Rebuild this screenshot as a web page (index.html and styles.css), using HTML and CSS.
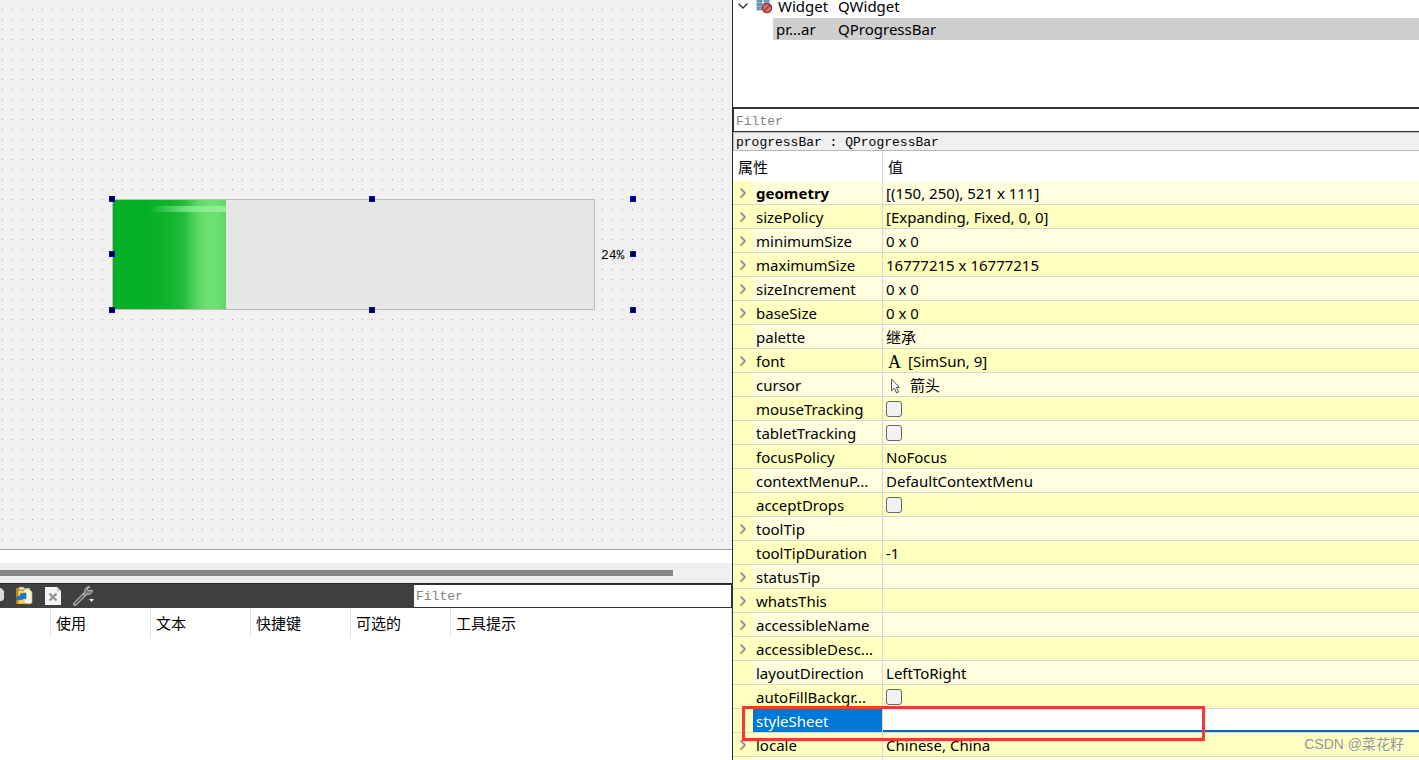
FILE: index.html
```
<!DOCTYPE html>
<html lang="zh-CN">
<head>
<meta charset="utf-8">
<title>Qt Designer</title>
<link rel="stylesheet" href="styles.css">
</head>
<body>
<svg class="defs" aria-hidden="true">
  <symbol id="chev" viewBox="0 0 8 12"><path d="M1.5 1.5 6 6 1.5 10.5" fill="none" stroke="#868686" stroke-width="1.7"/></symbol>
</svg>
<main class="app">
  <section class="left">
    <div class="canvas">
      <div class="widget">
        <progress class="bar" max="100" value="24" aria-label="progressBar"></progress>
        <span class="percent">24%</span>
        <i class="h tl"></i><i class="h tc"></i><i class="h tr"></i>
        <i class="h ml"></i><i class="h mr"></i>
        <i class="h bl"></i><i class="h bc"></i><i class="h br"></i>
      </div>
    </div>
    <div class="gap"></div>
    <div class="scroll"><div class="thumb"></div></div>
    <div class="toolbar">
      <div class="tools">
        <button class="tool cut" aria-label="复制"><svg width="4" height="16" viewBox="0 0 4 16"><path d="M0 0h1l3 3v8l-2 2H0z" fill="#dcdcdc"/></svg></button>
        <button class="tool" aria-label="粘贴"><svg width="18" height="20" viewBox="0 0 18 20">
          <path d="M1 2h14v15l-2 1H1z" fill="#e9b62c"/><path d="M1 2h2v16H1z" fill="#b98212"/>
          <path d="M4 1h5l1 3H4z" fill="#e8e8df" stroke="#77684a" stroke-width=".6"/>
          <path d="M4 5h5v12H4z" fill="#f6d565"/>
          <path d="M9 3h5l3 3v11l-3 1-5-1z" fill="#faf5d8" stroke="#c9ae62" stroke-width=".7"/>
          <path d="M1 14c0-3 2-4 5-4l-1-2 6-1v6l-2-1c-3 3-5 1-8 2z" fill="#1677e0" stroke="#0b4ea3" stroke-width=".5"/>
        </svg></button>
        <button class="tool" aria-label="删除"><svg width="16" height="18" viewBox="0 0 16 18">
          <path d="M0 0h12l4 4v14H0z" fill="#f4f4f4"/><path d="M12 0v4h4z" fill="#c9c9c9"/>
          <path d="m4.500 6.500 7 7m0-7-7 7" stroke="#929292" stroke-width="2.200"/>
        </svg></button>
        <button class="tool" aria-label="配置"><svg width="22" height="20" viewBox="0 0 22 20">
          <path d="M2 18 12 8" stroke="#a9a9a9" stroke-width="4" stroke-linecap="round"/>
          <path d="M2.500 17.500 12 8" stroke="#505050" stroke-width="1.600" stroke-linecap="round"/>
          <path d="M17 1c-3-1-6 2-5 5l-2 2 2 2 2-2c3 1 6-1 5-4l-3 1-2-2z" fill="#777" stroke="#c4c4c4"/>
          <path d="M16 13h5l-2.500 3z" fill="#eee"/>
        </svg></button>
      </div>
      <input class="filter" type="text" placeholder="Filter" aria-label="动作过滤">
    </div>
    <table class="actions">
      <thead><tr><th class="c0"></th><th class="c">使用</th><th class="c">文本</th><th class="c">快捷键</th><th class="c">可选的</th><th>工具提示</th></tr></thead>
    </table>
  </section>
  <section class="right">
    <div class="tree">
      <div class="node">
        <button class="fold" aria-label="折叠"><svg width="12" height="8" viewBox="0 0 12 8"><path d="M1.500 1.500 6 6l4.500-4.500" fill="none" stroke="#333" stroke-width="1.400"/></svg></button>
        <svg class="nicon" width="16" height="16" viewBox="0 0 16 16">
          <path d="M0 0h14v12H0z" fill="#dbe8f0"/>
          <path d="M1 1h5v3H1zM8 1h5v3H8zM1 5h5v3H1zM1 9h5v3H1zM8 5h5v3H8z" fill="#6e9fbe" stroke="#4f7896" stroke-width=".5"/>
          <circle cx="11" cy="10" r="4.500" fill="#c77" stroke="#a92f2f" stroke-width="1.500"/>
          <path d="m8 13 6-6" stroke="#a92f2f" stroke-width="1.500"/>
        </svg>
        <span class="nname">Widget</span><span>QWidget</span>
      </div>
      <div class="node child"><span class="nname">pr...ar</span><span>QProgressBar</span></div>
    </div>
    <input class="filter pf" type="text" placeholder="Filter" aria-label="属性过滤">
    <div class="path">progressBar : QProgressBar</div>
    <table class="props">
      <colgroup><col class="k0"><col class="k1"><col></colgroup>
      <thead><tr><th colspan="2" class="hn">属性</th><th class="hv">值</th></tr></thead>
      <tbody>
        <tr><td><button class="exp" aria-label="展开"><svg><use href="#chev"/></svg></button></td><td><b>geometry</b></td><td>[(150, 250), 521 x 111]</td></tr>
        <tr><td><button class="exp" aria-label="展开"><svg><use href="#chev"/></svg></button></td><td>sizePolicy</td><td>[Expanding, Fixed, 0, 0]</td></tr>
        <tr><td><button class="exp" aria-label="展开"><svg><use href="#chev"/></svg></button></td><td>minimumSize</td><td>0 x 0</td></tr>
        <tr><td><button class="exp" aria-label="展开"><svg><use href="#chev"/></svg></button></td><td>maximumSize</td><td>16777215 x 16777215</td></tr>
        <tr><td><button class="exp" aria-label="展开"><svg><use href="#chev"/></svg></button></td><td>sizeIncrement</td><td>0 x 0</td></tr>
        <tr><td><button class="exp" aria-label="展开"><svg><use href="#chev"/></svg></button></td><td>baseSize</td><td>0 x 0</td></tr>
        <tr><td></td><td>palette</td><td>继承</td></tr>
        <tr><td><button class="exp" aria-label="展开"><svg><use href="#chev"/></svg></button></td><td>font</td><td><div class="iv"><span class="fa">A</span>[SimSun, 9]</div></td></tr>
        <tr><td></td><td>cursor</td><td><div class="iv"><svg class="cur" width="16" height="16" viewBox="0 0 16 16"><path d="M4.500 1v12l3-3 2 5 2-1-2-4.500h3z" fill="#fff" stroke="#555"/></svg>箭头</div></td></tr>
        <tr><td></td><td><label for="mt">mouseTracking</label></td><td><input type="checkbox" id="mt"></td></tr>
        <tr><td></td><td><label for="tt">tabletTracking</label></td><td><input type="checkbox" id="tt"></td></tr>
        <tr><td></td><td>focusPolicy</td><td>NoFocus</td></tr>
        <tr><td></td><td>contextMenuP...</td><td>DefaultContextMenu</td></tr>
        <tr><td></td><td><label for="ad">acceptDrops</label></td><td><input type="checkbox" id="ad"></td></tr>
        <tr><td><button class="exp" aria-label="展开"><svg><use href="#chev"/></svg></button></td><td>toolTip</td><td></td></tr>
        <tr><td></td><td>toolTipDuration</td><td>-1</td></tr>
        <tr><td><button class="exp" aria-label="展开"><svg><use href="#chev"/></svg></button></td><td>statusTip</td><td></td></tr>
        <tr><td><button class="exp" aria-label="展开"><svg><use href="#chev"/></svg></button></td><td>whatsThis</td><td></td></tr>
        <tr><td><button class="exp" aria-label="展开"><svg><use href="#chev"/></svg></button></td><td>accessibleName</td><td></td></tr>
        <tr><td><button class="exp" aria-label="展开"><svg><use href="#chev"/></svg></button></td><td>accessibleDesc...</td><td></td></tr>
        <tr><td></td><td>layoutDirection</td><td>LeftToRight</td></tr>
        <tr><td></td><td><label for="af">autoFillBackgr...</label></td><td><input type="checkbox" id="af"></td></tr>
        <tr class="sel"><td><div class="mark"></div></td><td><label for="ss">styleSheet</label></td><td><input type="text" id="ss" class="edit"></td></tr>
        <tr><td><button class="exp" aria-label="展开"><svg><use href="#chev"/></svg></button></td><td>locale</td><td>Chinese, China</td></tr>
        <tr><td></td><td></td><td></td></tr>
      </tbody>
    </table>
  </section>
  <div class="wm">CSDN @菜花籽</div>
</main>
</body>
</html>
```
FILE: styles.css
```
* { box-sizing: border-box; }
body {
  margin: 0;
  background: #fff;
  color: #000;
  font: 15px/21px "Noto Sans", "Noto Sans CJK SC", sans-serif;
}
button { padding: 0; border: 0; background: none; display: flex; }
.defs { position: absolute; width: 0; height: 0; }
.app {
  position: relative;
  display: grid;
  grid-template-columns: minmax(0, 733fr) minmax(0, 686fr);
  height: 100vh;
  overflow: hidden;
}
.left { border-right: 1px solid #2b2b2b; display: flex; flex-direction: column; }

/* form canvas */
.canvas {
  position: relative;
  height: 550px;
  border-bottom: 1px solid #a0a0a0;
  background: #f0f0f0 conic-gradient(from 90deg at 9px 9px, #a0a0a0 25%, transparent 0) -7px 0 / 10px 10px;
}
.widget {
  position: absolute;
  left: 112px;
  top: 199px;
  width: 521px;
  height: 111px;
  display: flex;
  align-items: center;
}
.bar {
  appearance: none;
  width: 483px;
  height: 111px;
  border: 1px solid #bcbcbc;
  background: #e6e6e6;
}
.bar::-webkit-progress-bar { background: #e6e6e6; }
.bar::-webkit-progress-value {
  border-right: 2px solid #e6e6e6;
  background:
    linear-gradient(90deg, transparent 32%, #90ee90aa 62%, #90ee90 90%) 0 6px / 100% 6px no-repeat,
    linear-gradient(90deg, #06b025 30%, #0fb42c 50%, #24bd3d 63%, #5cd664 75%, #70e174 85%, #6cdf72 93%, #5fd868 100%);
}
.percent { margin-left: 6px; padding-top: 2px; font: 13px/16px "Liberation Mono", monospace; }
.h { position: absolute; width: 6px; height: 6px; background: #000; border: 1px solid #00f; }
.tl, .tc, .tr { top: -3px; }
.ml, .mr { top: 52px; }
.bl, .bc, .br { bottom: -3px; }
.tl, .ml, .bl { left: -3px; }
.tc, .bc { left: 257px; }
.tr, .mr, .br { right: -3px; }

.gap { height: 13px; }
.scroll { height: 20px; padding-top: 7px; background: #efefef; }
.thumb { width: 92%; height: 6px; background: #868686; }

/* action editor */
.toolbar {
  height: 25px;
  display: flex;
  background: #3f4041;
  border-top: 1px solid #262a29;
}
.tools { flex: 1; display: flex; align-items: center; gap: 12px; }
.tool.cut { margin-right: -1px; }
.filter {
  border: 1px solid #333;
  border-radius: 0;
  outline: 0;
  padding: 2px 2px 0;
  background: #fff;
  font: 13px/20px "Liberation Mono", monospace;
}
.filter::placeholder { color: #808080; }
.toolbar .filter { width: 318px; border-left: 0; }
.actions { width: 100%; table-layout: fixed; border-spacing: 0; }
.actions th {
  height: 29px;
  padding: 2px 5px 0;
  border-right: 1px solid #e2e2e2;
  font-weight: 400;
  text-align: left;
}
.c0 { width: 51px; }
.c { width: 100px; }

/* object tree */
.tree { height: 107px; overflow: hidden; }
.node { height: 24px; margin-top: -6px; display: flex; align-items: center; padding-left: 4px; }
.fold { margin-right: 7px; }
.nicon { margin-right: 6px; }
.nname { width: 60px; }
.child { height: 22px; margin: 0 0 0 40px; padding-left: 3px; background: #cfcfcf; }
.child .nname { width: 62px; }
.pf { display: block; width: 100%; height: 25px; border-top-width: 2px; border-right: 0; }
.path {
  height: 19px;
  padding-left: 2px;
  border: 1px solid #b8b8b8;
  border-right: 0;
  background: #f0f0f0;
  font: 13px/19px "Liberation Mono", monospace;
}

/* property table */
.props { width: 100%; table-layout: fixed; border-spacing: 0; }
.k0 { width: 20px; }
.k1 { width: 130px; }
.props th { height: 30px; padding: 2px 5px 0; font-weight: 400; text-align: left; }
.props .hn { border-right: 1px solid #dcdcdc; }
.props td {
  height: 24px;
  padding: 2px 3px 0;
  border-bottom: 1px solid #d6d6d6;
  background: #ffffbf;
  white-space: nowrap;
}
.props tr:nth-child(odd) td + td { background: #ffffdf; }
.props td:nth-child(2) { border-right: 1px solid #d6d6d6; }
.props td:first-child { padding: 0 6px; position: relative; }
.exp svg { width: 8px; height: 12px; }
.iv { display: flex; align-items: center; }
.fa { width: 22px; padding-left: 2px; font: 18px/20px "Liberation Serif", serif; }
.cur { margin: 0 7px 0 1px; }
input[type="checkbox"] {
  appearance: none;
  display: block;
  width: 16px;
  height: 16px;
  margin: 0 0 2px;
  border: 1px solid #666;
  border-radius: 3px;
  background: #f3f3f3;
}
.props .sel td:nth-child(2) { background: #0078d7; color: #fff; }
.props .sel td:nth-child(3) { padding: 0; }
.edit {
  display: block;
  width: 100%;
  height: 23px;
  border: 0;
  border-bottom: 2px solid #0067c0;
  outline: 0;
  background: #fff;
  font: inherit;
}
.mark {
  position: absolute;
  z-index: 1;
  left: 9px;
  top: -3px;
  width: 463px;
  height: 35px;
  border: 3px solid #fb3535;
  pointer-events: none;
}
.wm {
  position: absolute;
  right: 15px;
  bottom: 6px;
  color: #96968a;
  font: 14px/20px "Liberation Sans", "Noto Sans CJK SC", sans-serif;
  text-shadow: 1px 1px #fffff0;
}
```
